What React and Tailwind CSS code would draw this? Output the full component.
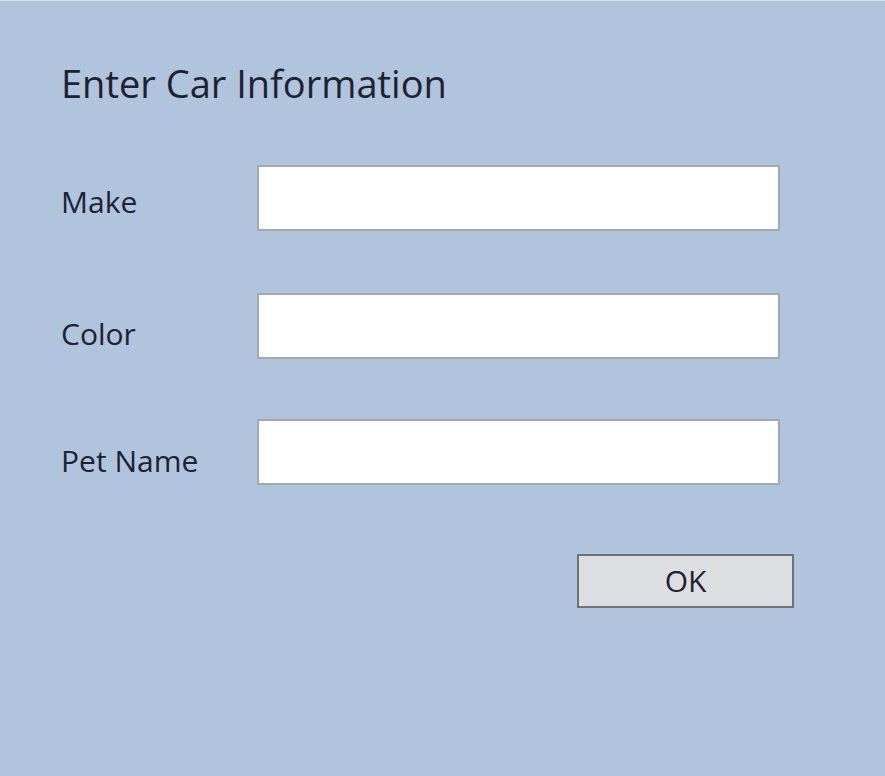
export default function App() {
  const font = { fontFamily: '"Open Sans", "Noto Sans", sans-serif' };
  const rows = [
    { label: "Make", mt: "mt-[58px]", pt: "pt-[17px]" },
    { label: "Color", mt: "mt-[62px]", pt: "pt-[21px]" },
    { label: "Pet Name", mt: "mt-[60px]", pt: "pt-[22px]" },
  ];
  return (
    <div className="w-[885px] h-[776px] bg-[#b0c4de] text-[#1e2230] relative overflow-hidden" style={font}>
      <div className="h-px bg-[#d8dee6]" />
      <div className="pl-[61px] pt-[58px]">
        <div className="text-[38px] leading-[48px]">Enter Car Information</div>
        {rows.map((r) => (
          <div key={r.label} className={`flex items-start ${r.mt}`}>
            <div className={`w-[196px] ${r.pt} text-[30px] leading-[40px]`}>{r.label}</div>
            <div className="w-[523px] h-[66px] bg-white border-2 border-[#a3a8b0]" />
          </div>
        ))}
        <div className="flex mt-[69px] pl-[516px]">
          <button className="w-[217px] h-[54px] bg-[#dcdee2] border-2 border-[#6e7177] text-[30px] leading-none text-[#1e2230]">
            OK
          </button>
        </div>
      </div>
    </div>
  );
}
